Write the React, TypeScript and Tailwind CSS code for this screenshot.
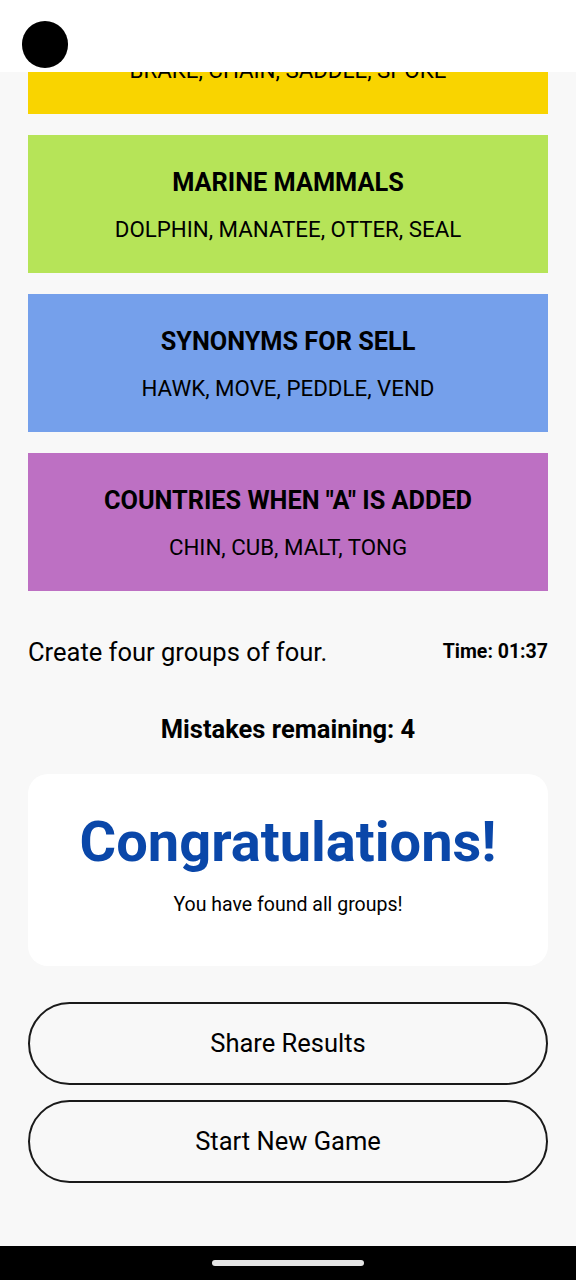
import React from "react";

const groups = [
  { title: "BICYCLE PARTS", words: "BRAKE, CHAIN, SADDLE, SPOKE", bg: "bg-[#f9d400]" },
  { title: "MARINE MAMMALS", words: "DOLPHIN, MANATEE, OTTER, SEAL", bg: "bg-[#b6e458]" },
  { title: "SYNONYMS FOR SELL", words: "HAWK, MOVE, PEDDLE, VEND", bg: "bg-[#75a0eb]" },
  { title: 'COUNTRIES WHEN "A" IS ADDED', words: "CHIN, CUB, MALT, TONG", bg: "bg-[#bd70c3]" },
];

export default function App() {
  return (
    <div
      className="relative w-[576px] h-[1280px] overflow-hidden bg-[#f8f8f8] text-black"
      style={{ fontFamily: "Roboto, 'Noto Sans', sans-serif" }}
    >
      <div className="flex flex-col px-[28px] mt-[-24px]">
        <div className="flex flex-col gap-[21px]">
          {groups.map((g) => (
            <div
              key={g.title}
              className={`${g.bg} h-[138px] flex flex-col items-center justify-center gap-[18px]`}
            >
              <div className="text-[25.3px] leading-[30px] font-bold mt-[2px]">{g.title}</div>
              <div className="text-[22.3px] leading-[26px]">{g.words}</div>
            </div>
          ))}
        </div>
        <div className="flex items-center justify-between mt-[44px] h-[34px]">
          <div className="text-[25.5px]">Create four groups of four.</div>
          <div className="text-[19.5px] font-bold">Time: 01:37</div>
        </div>
        <div className="text-center text-[25.5px] font-bold mt-[44px] leading-[32px]">
          Mistakes remaining: 4
        </div>
        <div className="mt-[29px] h-[192px] bg-white rounded-[20px] flex flex-col items-center justify-center">
          <div className="text-[56px] font-bold text-[#0a47a9] leading-[64px] mt-[-10px]">
            Congratulations!
          </div>
          <div className="text-[19.5px] mt-[16px]">You have found all groups!</div>
        </div>
        <div className="mt-[36px] flex flex-col gap-[15px]">
          <button className="h-[83px] w-full rounded-full border-2 border-[#1a1a1a] text-[25.5px] flex items-center justify-center">
            Share Results
          </button>
          <button className="h-[83px] w-full rounded-full border-2 border-[#1a1a1a] text-[25.5px] flex items-center justify-center">
            Start New Game
          </button>
        </div>
      </div>

      <div className="absolute top-0 left-0 w-full h-[72px] bg-white">
        <div className="absolute left-[22px] top-[21px] w-[46px] h-[47px] rounded-full bg-black" />
      </div>
      <div className="absolute bottom-0 left-0 w-full h-[34px] bg-black flex items-center justify-center">
        <div className="w-[152px] h-[6px] rounded-full bg-[#e5e5e5]" />
      </div>
    </div>
  );
}
